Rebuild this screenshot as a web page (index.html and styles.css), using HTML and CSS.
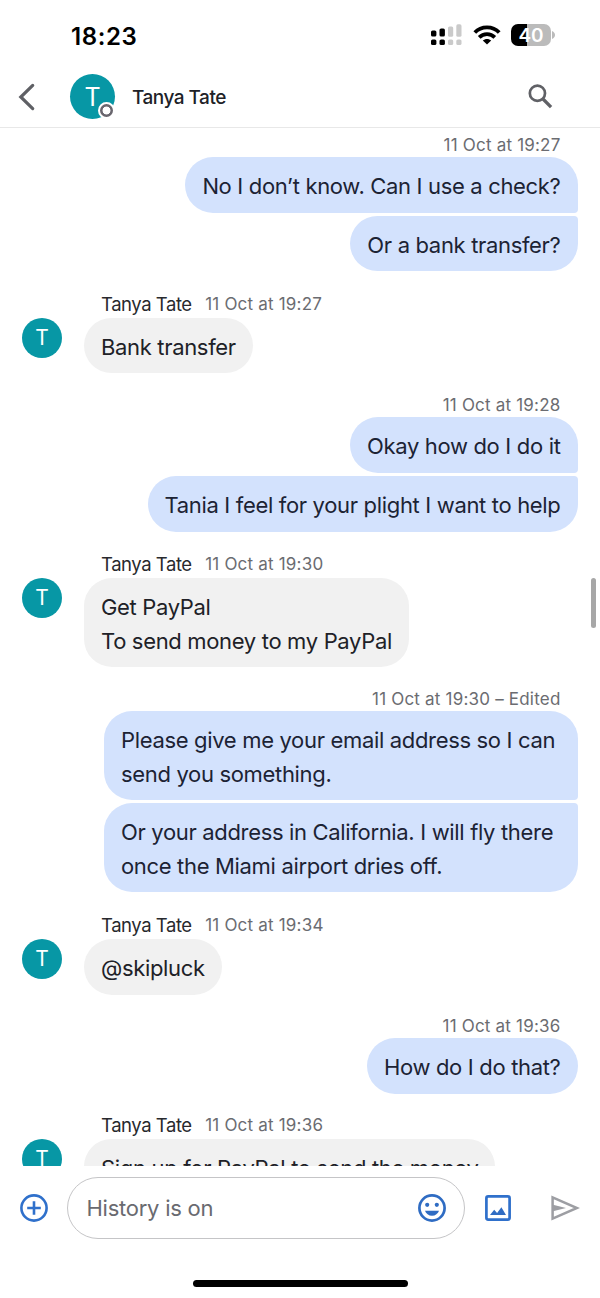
FILE: index.html
```html
<!DOCTYPE html>
<html lang="en">
<head>
<meta charset="utf-8">
<title>Tanya Tate</title>
<link rel="stylesheet" href="styles.css">
</head>
<body>
<div class="phone">
  <div class="status">
    <span class="clock">18:23</span>
    <div class="status-icons">
      <svg class="signal" width="32" height="22" viewBox="0 0 32 22">
        <rect x="0" y="6.5" width="5.4" height="6" rx="1.6"/><rect x="8.5" y="4.5" width="5.4" height="8" rx="1.6"/>
        <rect x="0" y="15.5" width="5.4" height="5.6" rx="1.6"/><rect x="8.5" y="15.5" width="5.4" height="5.6" rx="1.6"/>
        <g fill="#cacaca"><rect x="17" y="2.4" width="5.2" height="10.4" rx="1.6"/><rect x="25.3" y="0.3" width="5.2" height="12.5" rx="1.6"/><rect x="17" y="15.5" width="5.2" height="5.6" rx="1.6"/><rect x="25.3" y="15.5" width="5.2" height="5.6" rx="1.6"/></g>
      </svg>
      <svg class="wifi" width="28" height="20" viewBox="0 0 28 20">
        <g fill="none" stroke="#000" stroke-width="3.7"><path d="M1.8 7.6C8.2 .6 19.8 .6 26.2 7.6"/><path d="M6.2 12.4C10.4 8 17.6 8 21.8 12.4"/></g>
        <path d="M14 19.6l-4.2-4.1c2.2-2.1 6.2-2.1 8.4 0z"/>
      </svg>
      <div class="battery"><span class="charge">40</span></div>
      <svg class="cap" width="3" height="8" viewBox="0 0 3 8"><path d="M0 0c4 1.6 4 6.4 0 8z" fill="#bbb"/></svg>
    </div>
  </div>
  <header class="header">
    <svg class="back" width="18" height="28" viewBox="0 0 18 28"><path d="M14.7 2.4L2.8 14l11.9 11.6" fill="none" stroke="#5f6065" stroke-width="3.2" stroke-linecap="round"/></svg>
    <div class="avatar big">T<span class="presence"></span></div>
    <h1 class="title">Tanya Tate</h1>
    <svg class="search" width="25" height="25" viewBox="0 0 26 26"><circle cx="9.8" cy="9.6" r="7.9" fill="none" stroke="#606166" stroke-width="2.8"/><path d="M15.6 15.6l8.4 8.4" stroke="#606166" stroke-width="3.4"/></svg>
  </header>
  <main class="thread">
    <section class="sent">
      <div class="meta">11 Oct at 19:27</div>
      <p class="bubble">No I don’t know. Can I use a check?</p>
      <p class="bubble">Or a bank transfer?</p>
    </section>
    <section class="received">
      <div class="avatar">T</div>
      <div class="body">
        <div class="meta"><span class="name">Tanya Tate</span><span>11 Oct at 19:27</span></div>
        <p class="bubble">Bank transfer</p>
      </div>
    </section>
    <section class="sent">
      <div class="meta">11 Oct at 19:28</div>
      <p class="bubble">Okay how do I do it</p>
      <p class="bubble">Tania I feel for your plight I want to help</p>
    </section>
    <section class="received">
      <div class="avatar">T</div>
      <div class="body">
        <div class="meta"><span class="name">Tanya Tate</span><span>11 Oct at 19:30</span></div>
        <p class="bubble">Get PayPal<br>To send money to my PayPal</p>
      </div>
    </section>
    <section class="sent">
      <div class="meta">11 Oct at 19:30 – Edited</div>
      <p class="bubble wide">Please give me your email address so I can<br>send you something.</p>
      <p class="bubble wide">Or your address in California. I will fly there<br>once the Miami airport dries off.</p>
    </section>
    <section class="received">
      <div class="avatar">T</div>
      <div class="body">
        <div class="meta"><span class="name">Tanya Tate</span><span>11 Oct at 19:34</span></div>
        <p class="bubble">@skipluck</p>
      </div>
    </section>
    <section class="sent">
      <div class="meta">11 Oct at 19:36</div>
      <p class="bubble">How do I do that?</p>
    </section>
    <section class="received latest">
      <div class="avatar">T</div>
      <div class="body">
        <div class="meta"><span class="name">Tanya Tate</span><span>11 Oct at 19:36</span></div>
        <p class="bubble">Sign up for PayPal to send the money</p>
      </div>
    </section>
    <div class="scrollbar"></div>
  </main>
  <footer class="composer">
    <svg class="add" width="28" height="28" viewBox="0 0 28 28" fill="none" stroke="#2f70cb" stroke-width="2.6"><circle cx="14" cy="14" r="12.6"/><path d="M14 7.2v13.6M7.2 14h13.6"/></svg>
    <div class="field">
      <span>History is on</span>
      <svg width="28" height="28" viewBox="0 0 28 28" fill="#2f6cc3"><circle cx="14" cy="14" r="12.6" fill="none" stroke="#2f6cc3" stroke-width="2.7"/><circle cx="9.2" cy="10.8" r="2.1"/><circle cx="18.8" cy="10.8" r="2.1"/><path d="M7 16.8h14c-1 2.9-3.6 5-7 5s-6-2.1-7-5z"/></svg>
    </div>
    <svg class="image" width="26" height="26" viewBox="0 0 26 26"><rect x="1.4" y="1.4" width="23.2" height="23.2" rx="1.8" fill="none" stroke="#2f70cb" stroke-width="2.7"/><path d="M5 20l4.2-5.2 2.9 3.2 4.3-5.8L21 20z" fill="#2f6cc3"/></svg>
    <svg class="send" width="29" height="26" viewBox="0 0 29 26"><path d="M1.6 2.3v21.4L26 13z" fill="none" stroke="#9d9ea3" stroke-width="2.5"/><path d="M2 9.8L15 13 2 16.2z" fill="#9d9ea3"/></svg>
  </footer>
  <div class="home"></div>
</div>
</body>
</html>
```
FILE: styles.css
```css
* { box-sizing: border-box; }
body { margin: 0; background: #fff; font-family: Inter, "Liberation Sans", sans-serif; color: #202127; }
.phone { width: 600px; height: 1298px; display: flex; flex-direction: column; overflow: hidden; }
svg { display: block; flex: none; }

.status { height: 66px; flex: none; display: flex; padding: 0 45px 0 71px; justify-content: space-between; color: #000; }
.clock { font-size: 24px; font-weight: 600; line-height: 30px; margin-top: 22px; letter-spacing: 0.6px; }
.status-icons { display: flex; padding-top: 24px; }
.wifi { margin: 1px 0 0 9.5px; }
.battery { width: 40px; height: 22px; margin-left: 10.5px; border-radius: 7px; background: linear-gradient(90deg, #000 40%, #bbb 40%); text-align: center; }
.charge { display: block; color: #fff; font-size: 19px; font-weight: 600; line-height: 23px; }
.cap { margin: 7px 0 0 1px; }

.header { height: 62px; flex: none; display: flex; align-items: center; border-bottom: 1px solid #e8e8e8; padding: 0 47px 0 18px; }
.avatar { flex: none; width: 40px; height: 40px; border-radius: 50%; background: #0797a5; color: #fff; font-size: 21px; line-height: 40px; text-align: center; }
.big { position: relative; width: 45px; height: 45px; font-size: 25px; line-height: 46px; margin-left: 34px; }
.presence { position: absolute; right: 0; bottom: 0; width: 17px; height: 17px; border-radius: 50%; border: 2px solid #fff; background: radial-gradient(circle, #fff 3.6px, #69666e 4.3px); }
.title { flex: 1; margin: 0 0 0 17px; font-size: 19px; font-weight: 500; letter-spacing: -0.5px; line-height: 28px; padding-top: 2px; white-space: nowrap; }

.thread { position: relative; height: 1038px; flex: none; overflow: hidden; padding-top: 5px; }
.scrollbar { position: absolute; right: 4px; top: 450px; width: 5px; height: 50px; border-radius: 3px; background: #a7a7a7; }
.meta { font-size: 17px; line-height: 24px; color: #6b6c71; white-space: nowrap; letter-spacing: 0.2px; }
.bubble { margin: 0; padding: 13px 17px 9px; font-size: 22px; letter-spacing: -0.33px; line-height: 33.5px; min-height: 55.5px; border-radius: 28px; white-space: nowrap; }
.sent { display: flex; flex-direction: column; align-items: flex-end; padding-right: 22.5px; }
.sent .meta { padding-right: 17px; }
.sent .bubble { background: #d3e2fd; color: #1c2334; }
.sent .bubble:not(:last-child) { border-bottom-right-radius: 4px; }
.sent .bubble + .bubble { margin-top: 3.3px; border-top-right-radius: 4px; }
.received + .sent { padding-top: 19.8px; }
.sent .wide { width: 473.5px; }
.received { display: flex; padding: 18.7px 0 0 22px; }
.latest { padding-top: 17px; }
.received .avatar { margin-top: 28px; }
.body { margin-left: 22px; display: flex; flex-direction: column; align-items: flex-start; }
.received .meta { height: 28px; display: flex; align-items: center; gap: 13.5px; padding-left: 17px; }
.name { font-size: 18.5px; color: #28292d; letter-spacing: -0.45px; }
.received .bubble { background: #f1f1f1; }

.composer { height: 84px; flex: none; display: flex; align-items: center; padding: 0 20px 0 19.5px; }
.field { width: 398.5px; height: 62px; margin-left: 19.5px; border: 1.5px solid #c5c5c7; border-radius: 31px; display: flex; align-items: center; justify-content: space-between; padding: 0 17.5px 0 18.5px; font-size: 22px; letter-spacing: -0.25px; color: #696a70; }
.image { margin-left: 20.5px; }
.send { margin-left: 40px; }
.home { width: 215px; height: 7px; border-radius: 4px; background: #000; margin: 29.5px auto 0; }
```
